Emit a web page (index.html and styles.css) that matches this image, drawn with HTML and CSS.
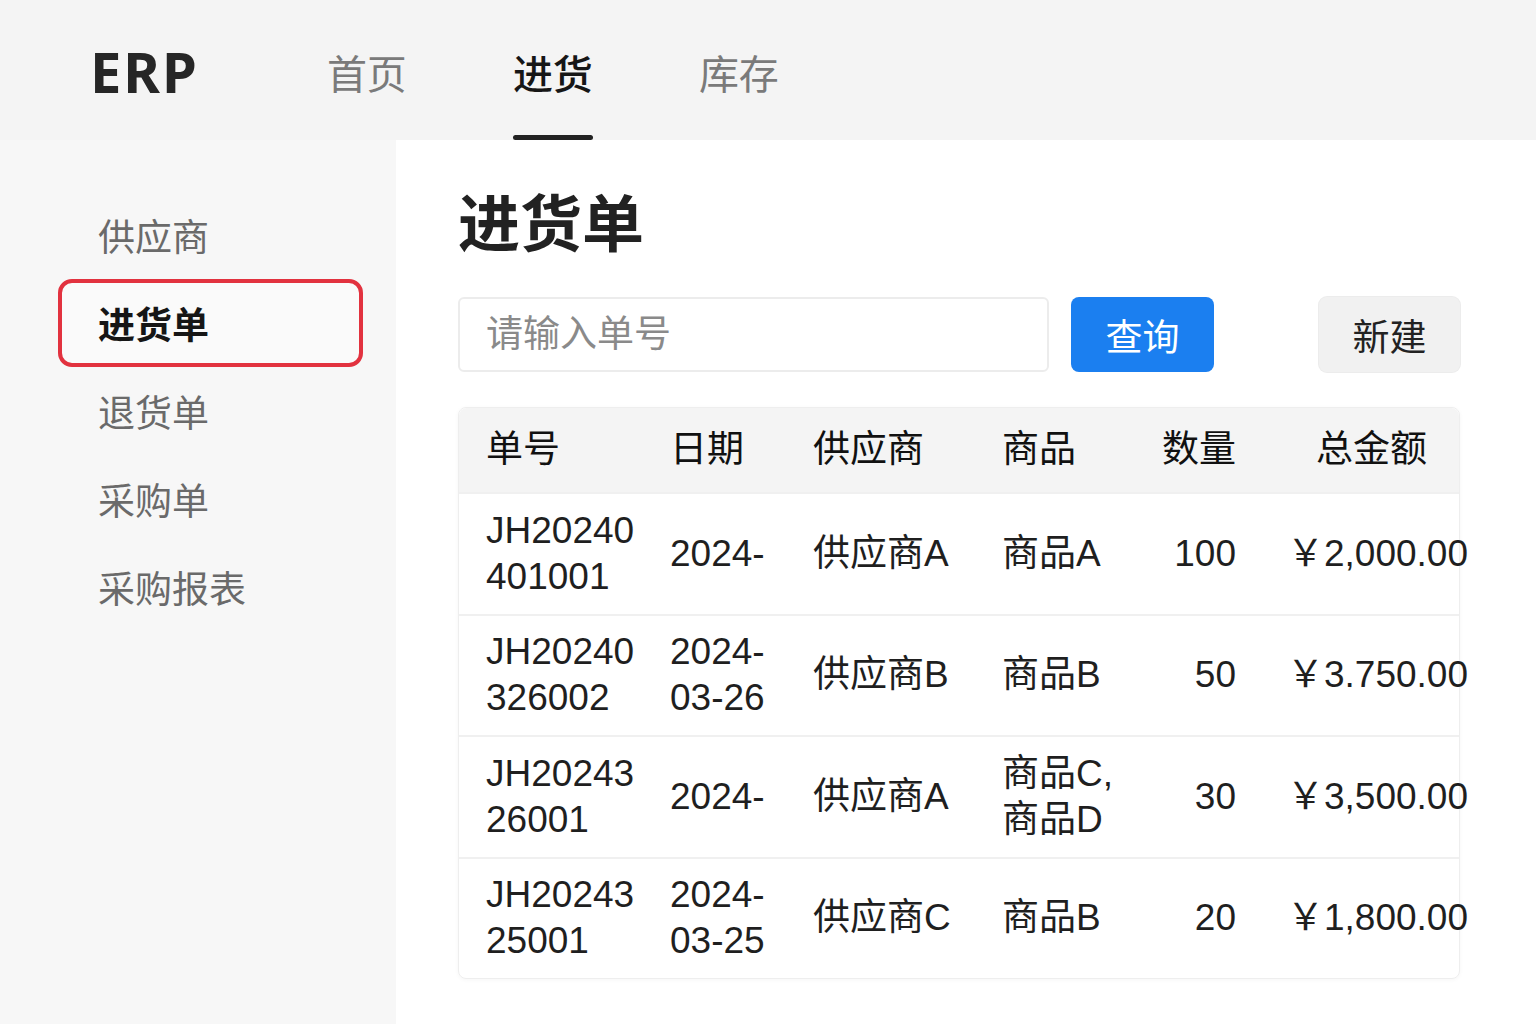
FILE: index.html
```html
<!DOCTYPE html>
<html lang="zh-CN">
<head>
<meta charset="utf-8">
<title>ERP - 进货单</title>
<link rel="stylesheet" href="styles.css">
</head>
<body>
<header class="topbar">
  <div class="logo">ERP</div>
  <nav class="topnav">
    <a class="nav-item">首页</a>
    <a class="nav-item active">进货</a>
    <a class="nav-item">库存</a>
  </nav>
</header>
<div class="layout">
  <aside class="sidebar">
    <a class="side-item">供应商</a>
    <a class="side-item active">进货单</a>
    <a class="side-item">退货单</a>
    <a class="side-item">采购单</a>
    <a class="side-item">采购报表</a>
  </aside>
  <main class="main">
    <h1 class="title">进货单</h1>
    <div class="toolbar">
      <input class="search" type="text" placeholder="请输入单号">
      <button class="btn btn-primary">查询</button>
      <button class="btn btn-light">新建</button>
    </div>
    <div class="table">
      <div class="row head">
        <div class="cell c1">单号</div>
        <div class="cell c2">日期</div>
        <div class="cell c3">供应商</div>
        <div class="cell c4">商品</div>
        <div class="cell c5">数量</div>
        <div class="cell c6">总金额</div>
      </div>
      <div class="row">
        <div class="cell c1">JH20240<br>401001</div>
        <div class="cell c2">2024-</div>
        <div class="cell c3">供应商A</div>
        <div class="cell c4">商品A</div>
        <div class="cell c5">100</div>
        <div class="cell c6">￥2,000.00</div>
      </div>
      <div class="row">
        <div class="cell c1">JH20240<br>326002</div>
        <div class="cell c2">2024-<br>03-26</div>
        <div class="cell c3">供应商B</div>
        <div class="cell c4">商品B</div>
        <div class="cell c5">50</div>
        <div class="cell c6">￥3.750.00</div>
      </div>
      <div class="row">
        <div class="cell c1">JH20243<br>26001</div>
        <div class="cell c2">2024-</div>
        <div class="cell c3">供应商A</div>
        <div class="cell c4">商品C,<br>商品D</div>
        <div class="cell c5">30</div>
        <div class="cell c6">￥3,500.00</div>
      </div>
      <div class="row">
        <div class="cell c1">JH20243<br>25001</div>
        <div class="cell c2">2024-<br>03-25</div>
        <div class="cell c3">供应商C</div>
        <div class="cell c4">商品B</div>
        <div class="cell c5">20</div>
        <div class="cell c6">￥1,800.00</div>
      </div>
    </div>
  </main>
</div>
</body>
</html>
```

FILE: styles.css
```css
* { box-sizing: border-box; }
html, body {
  margin: 0;
  padding: 0;
  height: 100%;
}
body {
  font-family: "Liberation Sans", "Noto Sans CJK SC", sans-serif;
  color: #1f1f1f;
  background: #ffffff;
  overflow: hidden;
}

.topbar {
  height: 140px;
  background: #f4f4f4;
  display: flex;
  align-items: stretch;
  padding-left: 90px;
}
.logo {
  font-family: "Noto Sans", sans-serif;
  font-size: 56px;
  font-weight: 700;
  letter-spacing: 2px;
  color: #262626;
  display: flex;
  align-items: center;
  padding-top: 2px;
  margin-right: 128px;
}
.topnav {
  display: flex;
  gap: 106px;
}
.nav-item {
  font-size: 40px;
  color: #7a7a7a;
  display: flex;
  align-items: center;
  padding-top: 4px;
  position: relative;
}
.nav-item.active {
  color: #161616;
  font-weight: 500;
}
.nav-item.active::after {
  content: "";
  position: absolute;
  left: 0;
  right: 0;
  bottom: 0;
  height: 5px;
  border-radius: 3px;
  background: #222;
}

.layout {
  display: flex;
  height: 884px;
}
.sidebar {
  width: 396px;
  background: #f7f7f7;
  padding-top: 51px;
  display: flex;
  flex-direction: column;
}
.side-item {
  height: 88px;
  margin-left: 58px;
  width: 305px;
  padding-left: 36px;
  display: flex;
  align-items: center;
  font-size: 37px;
  color: #6a6a6a;
  border: 4px solid transparent;
  border-radius: 14px;
}
.side-item.active {
  border-color: #e2323f;
  color: #161616;
  font-weight: 700;
  background: #fafafa;
}

.main {
  flex: 1;
  padding: 44px 0 0 62px;
}
.title {
  margin: 0;
  font-size: 62px;
  font-weight: 700;
  line-height: 84px;
  color: #222;
}
.toolbar {
  margin-top: 29px;
  width: 1002px;
  display: flex;
  gap: 22px;
}
.search {
  width: 591px;
  height: 75px;
  border: 2px solid #ececec;
  border-radius: 6px;
  background: #fff;
  padding: 0 0 0 26px;
  font-family: inherit;
  font-size: 37px;
  color: #333;
  outline: none;
}
.search::placeholder { color: #8a8a8a; }
.btn {
  height: 75px;
  border: none;
  border-radius: 8px;
  font-family: inherit;
  font-size: 37px;
  padding: 0;
}
.btn-primary {
  width: 143px;
  background: #1b7ff0;
  color: #fff;
}
.btn-light {
  width: 141px;
  margin-left: auto;
  background: #f1f1f1;
  color: #222;
  box-shadow: 0 0 0 1px #ececec;
}

.table {
  margin-top: 35px;
  width: 1002px;
  border: 1px solid #eeeeee;
  border-radius: 8px;
  box-shadow: 0 1px 4px rgba(0,0,0,0.04);
}
.row {
  display: grid;
  grid-template-columns: 211px 143px 189px 120px 114px 1fr;
  align-items: center;
  height: 121.5px;
  border-top: 2px solid #f0f0f0;
  font-size: 37px;
  line-height: 46px;
  color: #1f1f1f;
}
.row.head {
  height: 84px;
  border-top: none;
  background: #f4f4f4;
  border-radius: 8px 8px 0 0;
  font-weight: 400;
  color: #111;
}
.cell { white-space: nowrap; }
.c1 { padding-left: 27px; }
.c5 { text-align: right; }
.c6 { padding-left: 51px; }
.head .c6 { padding-left: 80px; }
```
